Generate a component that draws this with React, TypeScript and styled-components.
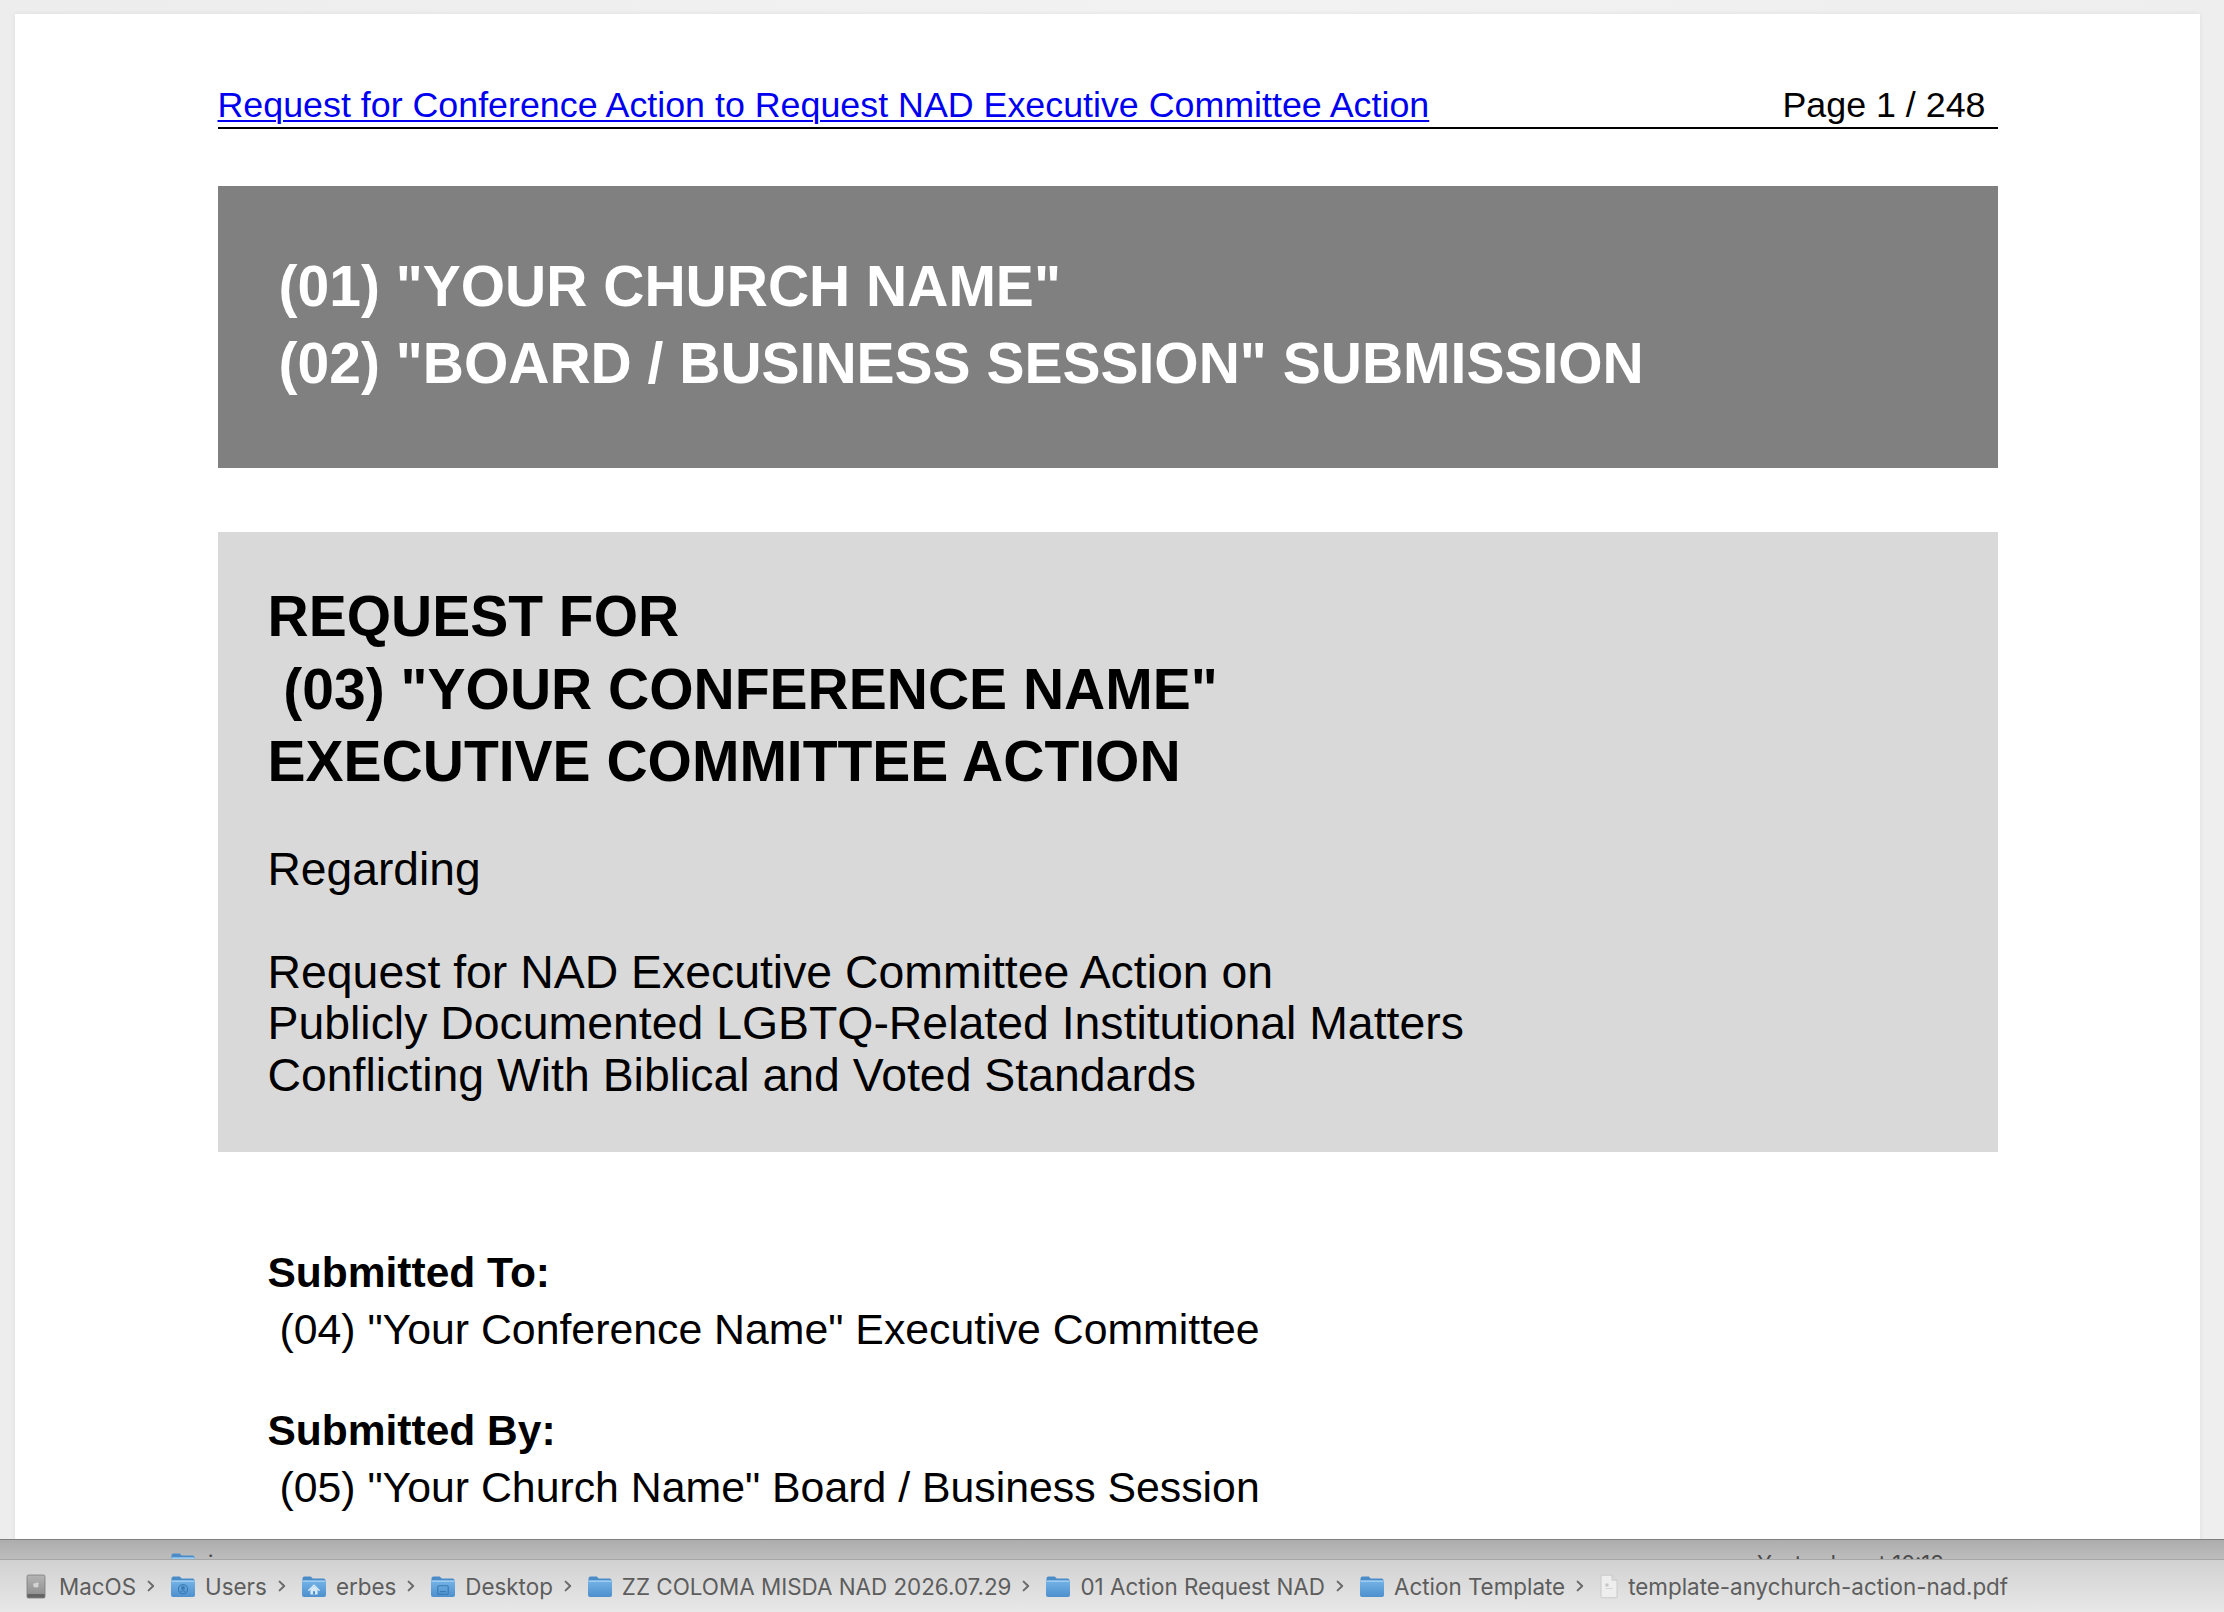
import React from 'react'
import styled, { createGlobalStyle } from 'styled-components'

const GlobalStyle = createGlobalStyle`
  html, body {
    margin: 0;
    padding: 0;
    height: 100%;
  }
  body {
    background: #ececec;
    overflow: hidden;
  }
  #root {
    height: 100%;
  }
`

const Window = styled.div`
  height: 100vh;
  display: flex;
  flex-direction: column;
`

// pdf preview area
const Viewer = styled.div`
  flex: 1;
  min-height: 0;
  overflow: hidden;
  padding: 14px 24px 0 15px;
  background: linear-gradient(90deg, #ededed 0%, #f2f2f2 55%, #eeeeee 100%);
`
const Sheet = styled.div`
  background: #fff;
  box-shadow: 0 0 5px rgba(0, 0, 0, 0.07);
  padding: 71px 0 300px;
  font-family: 'Liberation Sans', Arial, Helvetica, sans-serif;
  color: #000;
`
const Column = styled.div`
  width: 1780px;
  margin: 0 auto;
`
const Header = styled.div`
  display: flex;
  justify-content: space-between;
  align-items: flex-end;
  border-bottom: 2px solid #000;
  padding: 0 12px 2px 0;
  font-size: 35.8px;
  line-height: 40px;
`
const TitleLink = styled.a`
  color: #0000f0;
  text-decoration: underline;
  text-decoration-thickness: 2px;
  text-underline-offset: 3px;
`
const PageNo = styled.span`
  color: #000;
`
const Band = styled.div`
  margin-top: 57px;
  background: #808080;
  color: #fff;
  font-weight: 700;
  font-size: 57px;
  line-height: 77px;
  padding: 62px 60px 66px 61px;
`
const Panel = styled.div`
  margin-top: 64px;
  background: #d9d9d9;
  padding: 48px 50px 51px 50px;
`
const PanelTitle = styled.div`
  font-weight: 700;
  font-size: 57px;
  line-height: 72.5px;
`
const Line = styled.div`
  white-space: pre;
`
const Regarding = styled.div`
  margin-top: 45px;
  font-size: 46.2px;
  line-height: 52px;
`
const Subject = styled.div`
  margin-top: 52px;
  font-size: 46.4px;
  line-height: 51.5px;
`
const Parties = styled.div`
  margin-top: 92px;
  padding-left: 50px;
  font-size: 42.8px;
  line-height: 57px;
`
const Party = styled.div<{ $gap?: number }>`
  margin-top: ${({ $gap }) => $gap ?? 0}px;
`
const PartyLabel = styled.div`
  font-weight: 700;
  font-size: 42.5px;
`

// finder path bar
const Finder = styled.div`
  flex-shrink: 0;
  border-top: 1px solid #7e7e7e;
  font-family: Inter, 'Liberation Sans', sans-serif;
  font-size: 22px;
`
const HiddenRow = styled.div`
  height: 20px;
  overflow: hidden;
  border-bottom: 1px solid #a6a6a6;
  background: linear-gradient(#adadad, #bdbdbd);
  display: flex;
  align-items: flex-start;
  padding: 10px 0 0 150px;
  box-sizing: border-box;
  color: #4a4a4a;
  line-height: 26px;
`
const RowName = styled.div`
  display: flex;
  align-items: flex-start;
  gap: 12px;
`
const RowDate = styled.div`
  margin-left: auto;
  width: 467px;
`
const PathBar = styled.div`
  height: 52px;
  background: linear-gradient(#d1d1d1, #e8e8e8);
  display: flex;
  align-items: center;
  padding-left: 26px;
  color: #5d5d5d;
  font-size: 22.4px;
`
const Crumb = styled.div<{ $iconGap: number }>`
  display: flex;
  align-items: center;
  gap: ${({ $iconGap }) => $iconGap}px;
  white-space: nowrap;
`
const Sep = styled.div`
  display: flex;
  align-items: center;
  padding: 0 15px 0 11px;
`
const Nudge = styled.span<{ $top: number }>`
  display: block;
  margin-top: ${({ $top }) => $top}px;
`

type Glyph = 'user' | 'home' | 'desktop'

const FolderIcon = ({ glyph }: { glyph?: Glyph }) => (
  <svg width="26" height="23" viewBox="0 0 26 23">
    <defs>
      <linearGradient id="folderBody" x1="0" y1="0" x2="0" y2="1">
        <stop offset="0" stopColor="#74b3e7" />
        <stop offset="1" stopColor="#4e90cd" />
      </linearGradient>
    </defs>
    <path d="M1.5 3.6a2 2 0 0 1 2-2h6.2l2 2h10.8a2 2 0 0 1 2 2v3h-23z" fill="#4a8bc8" />
    <rect x="1" y="5.5" width="24" height="16.5" rx="2" fill="url(#folderBody)" />
    <rect x="1.6" y="5.5" width="22.8" height="1.3" rx="0.6" fill="#acd5f5" />
    {glyph === 'user' && (
      <g stroke="#3473ad" strokeWidth="1.1" fill="none" opacity="0.85">
        <circle cx="13" cy="14.2" r="4.6" />
        <circle cx="13" cy="12.9" r="1.4" fill="#3473ad" />
        <path d="M10.4 17.2c1.4-2 3.8-2 5.2 0" />
      </g>
    )}
    {glyph === 'home' && (
      <g opacity="0.9">
        <path d="M7.8 15.2L13 10.2l5.2 5" stroke="#e4f2fc" strokeWidth="1.4" fill="none" strokeLinecap="round" />
        <path d="M9.4 14.6V19.4h7.2v-4.8L13 11.2z" fill="#e4f2fc" />
        <rect x="12" y="16.2" width="2" height="3.2" fill="#4e90cd" />
      </g>
    )}
    {glyph === 'desktop' && (
      <g stroke="#3473ad" strokeWidth="1.1" fill="none" opacity="0.85">
        <rect x="7.8" y="10.8" width="10.4" height="8.4" rx="1" />
        <path d="M10 16.6h6" />
      </g>
    )}
  </svg>
)

const DriveIcon = () => (
  <svg width="20" height="25" viewBox="0 0 20 25">
    <defs>
      <linearGradient id="driveBody" x1="0" y1="0" x2="0" y2="1">
        <stop offset="0" stopColor="#b4b4b4" />
        <stop offset="1" stopColor="#8a8a8a" />
      </linearGradient>
    </defs>
    <rect x="1" y="1" width="18" height="23" rx="1.5" fill="url(#driveBody)" stroke="#7c7c7c" strokeWidth="0.8" />
    <rect x="1.4" y="20" width="17.2" height="3.6" fill="#646464" />
    <path
      d="M10 8.9c.5 0 .9-.3 1.4-.3.7 0 1.2.4 1.5.9-.8.4-1 1.6-.2 2.2-.3.9-.9 1.8-1.5 1.8-.4 0-.7-.2-1.2-.2s-.8.2-1.2.2c-.7 0-1.6-1.4-1.6-2.6 0-1.3.8-2 1.6-2 .4 0 .8.3 1.2.3z"
      fill="#d4d4d4"
    />
    <path d="M10.1 8.6c0-.6.4-1.1 1-1.2 0 .6-.4 1.1-1 1.2z" fill="#d4d4d4" />
  </svg>
)

const FileIcon = () => (
  <svg width="20" height="25" viewBox="0 0 20 25">
    <path d="M2 1.2h11l5 5v16.6a1 1 0 0 1-1 1H3a1 1 0 0 1-1-1z" fill="#eeeeee" stroke="#c6c6c6" strokeWidth="0.9" />
    <path d="M13 1.2v5h5" fill="#dcdcdc" stroke="#c6c6c6" strokeWidth="0.9" />
    <rect x="6.5" y="9.5" width="3" height="3" rx="0.6" fill="#c4c4c4" />
    <rect x="6.5" y="14" width="7" height="0.9" fill="#d2d2d2" />
  </svg>
)

const Chevron = () => (
  <svg width="8" height="12" viewBox="0 0 8 12">
    <polyline points="1.6,1.6 6.2,6 1.6,10.4" fill="none" stroke="#6a6a6a" strokeWidth="2" strokeLinecap="round" strokeLinejoin="round" />
  </svg>
)

type Crumbs = { label: string; icon: 'drive' | 'file' | Glyph | 'folder' }

const path: Crumbs[] = [
  { label: 'MacOS', icon: 'drive' },
  { label: 'Users', icon: 'user' },
  { label: 'erbes', icon: 'home' },
  { label: 'Desktop', icon: 'desktop' },
  { label: 'ZZ COLOMA MISDA NAD 2026.07.29', icon: 'folder' },
  { label: '01 Action Request NAD', icon: 'folder' },
  { label: 'Action Template', icon: 'folder' },
  { label: 'template-anychurch-action-nad.pdf', icon: 'file' },
]

const CrumbIcon = ({ icon }: { icon: Crumbs['icon'] }) => {
  if (icon === 'drive') return <DriveIcon />
  if (icon === 'file') return <FileIcon />
  if (icon === 'folder') return <FolderIcon />
  return <FolderIcon glyph={icon} />
}

const App = (): JSX.Element => (
  <>
    <GlobalStyle />
    <Window>
      <Viewer>
        <Sheet>
          <Column>
            <Header>
              <TitleLink href="#">Request for Conference Action to Request NAD Executive Committee Action</TitleLink>
              <PageNo>Page 1 / 248</PageNo>
            </Header>

            <Band>
              <Line>(01) "YOUR CHURCH NAME"</Line>
              <Line>(02) "BOARD / BUSINESS SESSION" SUBMISSION</Line>
            </Band>

            <Panel>
              <PanelTitle>
                <Line>REQUEST FOR</Line>
                <Line> (03) "YOUR CONFERENCE NAME"</Line>
                <Line>EXECUTIVE COMMITTEE ACTION</Line>
              </PanelTitle>
              <Regarding>Regarding</Regarding>
              <Subject>
                <Line>Request for NAD Executive Committee Action on</Line>
                <Line>Publicly Documented LGBTQ-Related Institutional Matters</Line>
                <Line>Conflicting With Biblical and Voted Standards</Line>
              </Subject>
            </Panel>

            <Parties>
              <Party>
                <PartyLabel>Submitted To:</PartyLabel>
                <Line> (04) "Your Conference Name" Executive Committee</Line>
              </Party>
              <Party $gap={44}>
                <PartyLabel>Submitted By:</PartyLabel>
                <Line> (05) "Your Church Name" Board / Business Session</Line>
              </Party>
            </Parties>
          </Column>
        </Sheet>
      </Viewer>

      <Finder>
        <HiddenRow>
          <RowName>
            <Nudge $top={3}>
              <Chevron />
            </Nudge>
            <Nudge $top={2}>
              <FolderIcon />
            </Nudge>
            <span>images</span>
          </RowName>
          <RowDate>Yesterday at 10:18</RowDate>
        </HiddenRow>
        <PathBar>
          {path.map((c, i) => (
            <React.Fragment key={c.label}>
              <Crumb $iconGap={c.icon === 'drive' ? 13 : 9}>
                <CrumbIcon icon={c.icon} />
                <span>{c.label}</span>
              </Crumb>
              {i < path.length - 1 && (
                <Sep>
                  <Chevron />
                </Sep>
              )}
            </React.Fragment>
          ))}
        </PathBar>
      </Finder>
    </Window>
  </>
)

export default App
